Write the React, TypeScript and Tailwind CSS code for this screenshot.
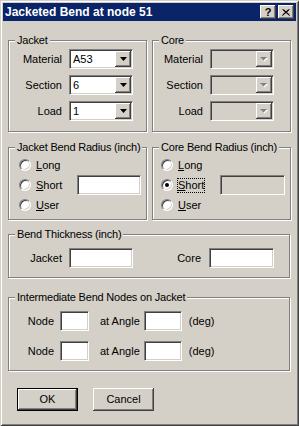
import React from "react";

const sunken =
  "border border-t-[#808080] border-l-[#808080] border-b-white border-r-white shadow-[inset_1px_1px_0_#404040,inset_-1px_-1px_0_#d4d0c8]";
const raised =
  "bg-[#d4d0c8] shadow-[inset_-1px_-1px_0_#404040,inset_1px_1px_0_#fff,inset_-2px_-2px_0_#808080]";

function Group({ title, className, children }: { title: string; className?: string; children?: React.ReactNode }) {
  return (
    <div className={`relative border border-[#808080] shadow-[1px_1px_0_#fff,inset_1px_1px_0_#fff] ${className ?? ""}`}>
      <span className="absolute left-[6px] top-[-8px] whitespace-nowrap bg-[#d4d0c8] px-[2px] leading-[14px] tracking-[-0.2px]">
        {title}
      </span>
      {children}
    </div>
  );
}

function Combo({ value, disabled }: { value?: string; disabled?: boolean }) {
  return (
    <div className={`${sunken} flex h-[20px] w-[64px] p-[1px] ${disabled ? "bg-[#d4d0c8]" : "bg-white"}`}>
      <div className="flex flex-1 items-center pl-[2px]">{value}</div>
      <div className={`${raised} flex h-[16px] w-[16px] items-center justify-center`}>
        {disabled ? (
          <svg width="8" height="5">
            <path d="M1 1h7L4.5 4.5z" fill="#fff" />
            <path d="M0 0h7L3.5 3.5z" fill="#808080" />
          </svg>
        ) : (
          <svg width="7" height="4">
            <path d="M0 0h7L3.5 4z" fill="#000" />
          </svg>
        )}
      </div>
    </div>
  );
}

function Field({ w, disabled }: { w: string; disabled?: boolean }) {
  return <div className={`${sunken} h-[20px] ${w} ${disabled ? "bg-[#d4d0c8]" : "bg-white"}`} />;
}

function Radio({ checked }: { checked?: boolean }) {
  return (
    <div className="flex h-[12px] w-[12px] items-center justify-center rounded-full border border-t-[#808080] border-l-[#808080] border-b-white border-r-white bg-white shadow-[inset_1px_1px_0_#404040,inset_-1px_-1px_0_#d4d0c8]">
      {checked && <div className="h-[4px] w-[4px] rounded-full bg-black" />}
    </div>
  );
}

function RadioRow({ m, rest, checked, focus, children }: { m: string; rest: string; checked?: boolean; focus?: boolean; children?: React.ReactNode }) {
  return (
    <div className="flex h-[20px] items-center">
      <div className="flex items-center gap-[5px]">
        <Radio checked={checked} />
        <span className={focus ? "leading-[13px] outline-1 outline-dotted outline-black" : ""}>
          <span className="underline underline-offset-[1px]">{m}</span>
          {rest}
        </span>
      </div>
      {children}
    </div>
  );
}

function ComboRow({ label, lw, value, disabled }: { label: string; lw: string; value?: string; disabled?: boolean }) {
  return (
    <div className="flex items-center gap-[7px]">
      <span className={`${lw} text-right`}>{label}</span>
      <Combo value={value} disabled={disabled} />
    </div>
  );
}

export default function App() {
  return (
    <div className="h-[426px] w-[299px] bg-[#d4d0c8] p-[3px] text-[11px] text-black font-['Liberation_Sans',Arial,sans-serif] shadow-[inset_1px_1px_0_#d4d0c8,inset_-1px_-1px_0_#404040,inset_2px_2px_0_#fff,inset_-2px_-2px_0_#808080]">
      {/* title bar */}
      <div className="flex h-[18px] items-center justify-between bg-[#0a246a] px-[2px]">
        <span className="text-[12px] font-bold text-white">Jacketed Bend at node 51</span>
        <div className="flex gap-[2px]">
          <div className={`${raised} flex h-[14px] w-[16px] items-center justify-center text-[11px] font-bold leading-none`}>?</div>
          <div className={`${raised} flex h-[14px] w-[16px] items-center justify-center`}>
            <svg width="8" height="7">
              <path d="M0.5 0.5l7 6M1.5 0.5l6 5.5M7.5 0.5l-7 6M6.5 0.5l-6 5.5" stroke="#000" strokeWidth="1" />
            </svg>
          </div>
        </div>
      </div>

      <div className="pl-[5px]">
        {/* jacket / core */}
        <div className="mt-[19px] flex gap-[5px]">
          <Group title="Jacket" className="h-[92px] w-[139px]">
            <div className="flex flex-col gap-[6px] pt-[8px]">
              <ComboRow label="Material" lw="w-[53px]" value="A53" />
              <ComboRow label="Section" lw="w-[53px]" value="6" />
              <ComboRow label="Load" lw="w-[53px]" value="1" />
            </div>
          </Group>
          <Group title="Core" className="h-[92px] w-[139px]">
            <div className="flex flex-col gap-[6px] pt-[8px]">
              <ComboRow label="Material" lw="w-[50px]" disabled />
              <ComboRow label="Section" lw="w-[50px]" disabled />
              <ComboRow label="Load" lw="w-[50px]" disabled />
            </div>
          </Group>
        </div>

        {/* bend radius */}
        <div className="mt-[15px] flex gap-[5px]">
          <Group title="Jacket Bend Radius (inch)" className="h-[73px] w-[139px]">
            <div className="flex flex-col pl-[10px] pt-[7px]">
              <RadioRow m="L" rest="ong" />
              <RadioRow m="S" rest="hort">
                <div className="ml-[15px]">
                  <Field w="w-[64px]" />
                </div>
              </RadioRow>
              <RadioRow m="U" rest="ser" />
            </div>
          </Group>
          <Group title="Core Bend Radius (inch)" className="h-[73px] w-[139px]">
            <div className="flex flex-col pl-[8px] pt-[7px]">
              <RadioRow m="L" rest="ong" />
              <RadioRow m="S" rest="hort" checked focus>
                <div className="ml-[16px]">
                  <Field w="w-[65px]" disabled />
                </div>
              </RadioRow>
              <RadioRow m="U" rest="ser" />
            </div>
          </Group>
        </div>

        {/* bend thickness */}
        <Group title="Bend Thickness (inch)" className="mt-[14px] h-[44px] w-[282px]">
          <div className="flex items-center pt-[13px]">
            <span className="w-[53px] text-right">Jacket</span>
            <div className="ml-[7px]">
              <Field w="w-[64px]" />
            </div>
            <span className="w-[68px] text-right">Core</span>
            <div className="ml-[8px]">
              <Field w="w-[65px]" />
            </div>
          </div>
        </Group>

        {/* intermediate nodes */}
        <Group title="Intermediate Bend Nodes on Jacket" className="mt-[19px] h-[74px] w-[282px]">
          <div className="flex flex-col gap-[10px] pt-[13px]">
            {[0, 1].map((i) => (
              <div key={i} className="flex items-center">
                <span className="w-[45px] text-right">Node</span>
                <div className="ml-[6px]">
                  <Field w="w-[29px]" />
                </div>
                <span className="ml-[11px]">at Angle</span>
                <div className="ml-[4px]">
                  <Field w="w-[38px]" />
                </div>
                <span className="ml-[7px]">(deg)</span>
              </div>
            ))}
          </div>
        </Group>

        {/* buttons */}
        <div className="mt-[17px] flex gap-[15px] pl-[9px]">
          <div className="h-[23px] w-[61px] border border-black">
            <div className={`${raised} flex h-full w-full items-center justify-center`}>OK</div>
          </div>
          <div className={`${raised} flex h-[23px] w-[61px] items-center justify-center`}>Cancel</div>
        </div>
      </div>
    </div>
  );
}
